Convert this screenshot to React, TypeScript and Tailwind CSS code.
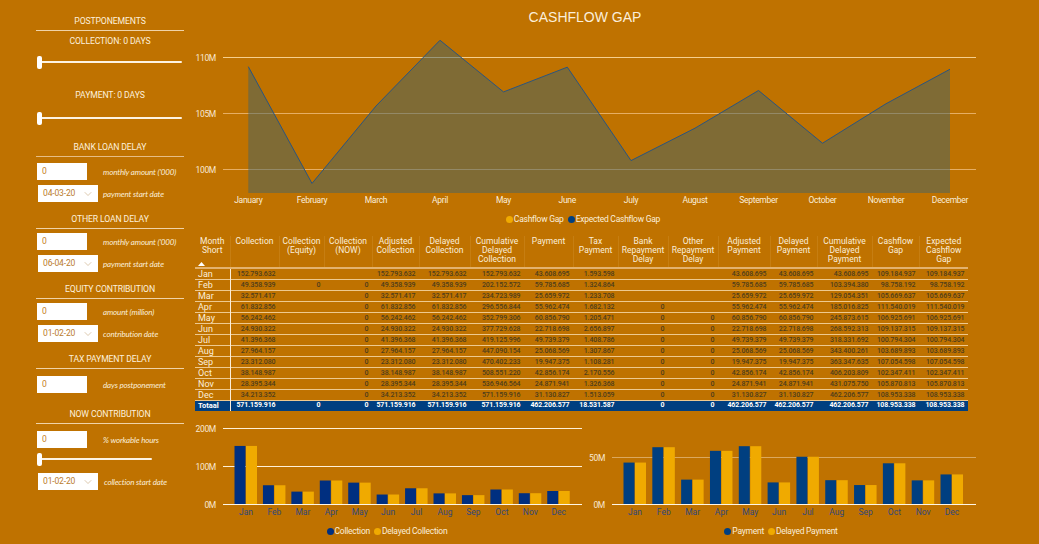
import React from "react";
import { ChevronDown } from "lucide-react";

const months = ["Jan", "Feb", "Mar", "Apr", "May", "Jun", "Jul", "Aug", "Sep", "Oct", "Nov", "Dec"];
const fullMonths = ["January", "February", "March", "April", "May", "June", "July", "August", "September", "October", "November", "December"];

const collection = ["152.793.632", "49.358.939", "32.571.417", "61.832.856", "56.242.462", "24.930.322", "41.396.368", "27.964.157", "23.312.080", "38.148.987", "28.395.344", "34.213.352"];
const cumCollection = ["152.793.632", "202.152.572", "234.723.989", "296.556.844", "352.799.306", "377.729.628", "419.125.996", "447.090.154", "470.402.233", "508.551.220", "536.946.564", "571.159.916"];
const payment = ["43.608.695", "59.785.685", "25.659.972", "55.962.474", "60.856.790", "22.718.698", "49.739.379", "25.068.569", "19.947.375", "42.856.174", "24.871.941", "31.130.827"];
const tax = ["1.593.598", "1.324.864", "1.233.708", "1.682.132", "1.205.471", "2.656.897", "1.408.786", "1.307.867", "1.108.281", "2.170.556", "1.326.368", "1.513.059"];
const cumPayment = ["43.608.695", "103.394.380", "129.054.351", "185.016.825", "245.873.615", "268.592.313", "318.331.692", "343.400.261", "363.347.635", "406.203.809", "431.075.750", "462.206.577"];
const gap = ["109.184.937", "98.758.192", "105.669.637", "111.540.019", "106.925.691", "109.137.315", "100.794.304", "103.689.893", "107.054.598", "102.347.411", "105.870.813", "108.953.338"];

const toNum = (s: string) => Number(s.split(".").join("")) / 1000000;

const zeroFrom = (start: number, only?: number) =>
  months.map((_, i) => (only !== undefined ? (i === only ? "0" : "") : i >= start ? "0" : ""));

const columns = [
  { head: ["Collection"], width: "w-[49px]", values: collection, total: "571.159.916" },
  { head: ["Collection", "(Equity)"], width: "w-[45px]", values: zeroFrom(0, 1), total: "0" },
  { head: ["Collection", "(NOW)"], width: "w-[48px]", values: zeroFrom(1), total: "0" },
  { head: ["Adjusted", "Collection"], width: "w-[47px]", values: collection, total: "571.159.916" },
  { head: ["Delayed", "Collection"], width: "w-[51px]", values: collection, total: "571.159.916" },
  { head: ["Cumulative", "Delayed", "Collection"], width: "w-[54px]", values: cumCollection, total: "571.159.916" },
  { head: ["Payment"], width: "w-[49px]", values: payment, total: "462.206.577" },
  { head: ["Tax", "Payment"], width: "w-[45px]", values: tax, total: "18.531.587" },
  { head: ["Bank", "Repayment", "Delay"], width: "w-[50px]", values: zeroFrom(3), total: "0" },
  { head: ["Other", "Repayment", "Delay"], width: "w-[50px]", values: zeroFrom(4), total: "0" },
  { head: ["Adjusted", "Payment"], width: "w-[52px]", values: payment, total: "462.206.577" },
  { head: ["Delayed", "Payment"], width: "w-[47px]", values: payment, total: "462.206.577" },
  { head: ["Cumulative", "Delayed", "Payment"], width: "w-[55px]", values: cumPayment, total: "462.206.577" },
  { head: ["Cashflow", "Gap"], width: "w-[47px]", values: gap, total: "108.953.338" },
  { head: ["Expected", "Cashflow", "Gap"], width: "w-[49px]", values: gap, total: "108.953.338" },
];

const Heading = ({ children, line = "border-[#f0d3a8]" }: { children: React.ReactNode; line?: string }) => (
  <div className={`ml-[36px] w-[148px] border-b ${line} pb-[3px] text-center text-[8.7px] leading-[12px] tracking-[-0.15px] text-[#fdf0dc]`}>{children}</div>
);

const Slider = ({ width }: { width: string }) => (
  <div className={`relative ml-[37px] h-[13px] ${width}`}>
    <div className="absolute left-[3px] right-0 top-[5px] h-[2px] rounded-full bg-[#fdf3e3]" />
    <div className="absolute left-0 top-0 h-[13px] w-[5px] rounded-[2px] bg-white" />
  </div>
);

const NumberField = ({ label, className = "" }: { label: string; className?: string }) => (
  <div className={`ml-[37px] flex items-center ${className}`}>
    <div className="flex h-[17px] w-[50px] items-center bg-white pl-[5px] font-['Roboto',sans-serif] text-[8.5px] text-[#c4801f]">0</div>
    <span className="ml-[16px] font-['Lato',sans-serif] text-[8px] italic tracking-[-0.15px] text-[#fbeeda]">{label}</span>
  </div>
);

const DateField = ({ value, label, className = "", labelGap = "ml-[5px]" }: { value: string; label: string; className?: string; labelGap?: string }) => (
  <div className={`ml-[38px] flex items-center ${className}`}>
    <div className="flex h-[17px] w-[60px] items-center justify-between bg-white pl-[5px] pr-[4px] font-['Roboto',sans-serif] text-[8.5px] tracking-[-0.15px] text-[#b97b2c]">
      {value}
      <ChevronDown size={12} strokeWidth={1} color="#b9925f" />
    </div>
    <span className={`${labelGap} font-['Lato',sans-serif] text-[8px] italic tracking-[-0.15px] text-[#fbeeda]`}>{label}</span>
  </div>
);

const Sidebar = () => (
  <aside className="w-[195px] shrink-0 pt-[15px] font-['Roboto',sans-serif]">
    <Heading>POSTPONEMENTS</Heading>
    <div className="mt-[4px] w-[184px] pl-[36px] text-center text-[8.7px] leading-[12px] tracking-[-0.15px] text-[#fdf0dc]">COLLECTION: 0 DAYS</div>
    <Slider width="w-[145px] mt-[9px]" />
    <div className="mt-[20px] w-[184px] pl-[36px] text-center text-[8.7px] leading-[12px] tracking-[-0.15px] text-[#fdf0dc]">PAYMENT: 0 DAYS</div>
    <Slider width="w-[145px] mt-[11px]" />

    <div className="mt-[16px]">
      <Heading line="border-[#e6bd85]">BANK LOAN DELAY</Heading>
    </div>
    <NumberField className="mt-[6px]" label="monthly amount ('000)" />
    <DateField className="mt-[5px]" value="04-03-20" label="payment start date" />

    <div className="mt-[11px]">
      <Heading>OTHER LOAN DELAY</Heading>
    </div>
    <NumberField className="mt-[4px]" label="monthly amount ('000)" />
    <DateField className="mt-[5px]" value="06-04-20" label="payment start date" />

    <div className="mt-[11px]">
      <Heading>EQUITY CONTRIBUTION</Heading>
    </div>
    <NumberField className="mt-[4px]" label="amount (million)" />
    <DateField className="mt-[5px]" value="01-02-20" label="contribution date" />

    <div className="mt-[11px]">
      <Heading>TAX PAYMENT DELAY</Heading>
    </div>
    <NumberField className="mt-[7px]" label="days postponement" />

    <div className="mt-[15px]">
      <Heading>NOW CONTRIBUTION</Heading>
    </div>
    <NumberField className="mt-[7px]" label="% workable hours" />
    <Slider width="w-[115px] mt-[5px]" />
    <DateField className="mt-[7px]" value="01-02-20" label="collection start date" labelGap="ml-[6px]" />
  </aside>
);

const Legend = ({ items, className = "" }: { items: { label: string; color: string }[]; className?: string }) => (
  <div className={`flex items-center justify-center gap-[4px] font-['Roboto',sans-serif] text-[8.5px] tracking-[-0.25px] text-[#fbeeda] ${className}`}>
    {items.map((item) => (
      <span key={item.label} className="flex items-center gap-[1px]">
        <svg width="7" height="7" viewBox="0 0 7 7">
          <circle cx="3.5" cy="3.5" r="3.5" fill={item.color} />
        </svg>
        {item.label}
      </span>
    ))}
  </div>
);

const CashflowChart = () => {
  const xs = [248.3, 312, 376, 440, 503.5, 567.3, 631, 695, 758.5, 822.5, 886, 950];
  const points = gap.map((g, i) => `${xs[i]},${57.5 + (110 - toNum(g)) * 11.2}`).join(" ");
  const grid = [
    { y: 57.5, label: "110M", color: "#f6cf8d" },
    { y: 113.5, label: "105M", color: "#e6ae64" },
    { y: 169.5, label: "100M", color: "#e6ae64" },
  ];
  return (
    <svg width="844" height="174" viewBox="195 34 844 174" className="block font-['Roboto',sans-serif]">
      {grid.map((g) => (
        <g key={g.label}>
          <line x1="223" x2="976" y1={g.y} y2={g.y} stroke={g.color} strokeWidth="1" />
          <text x="216" y={g.y + 3} textAnchor="end" fontSize="8.5" letterSpacing="-0.3" fill="#f9e8d2">{g.label}</text>
        </g>
      ))}
      <polygon points={`248.3,193 ${points} 950,193`} fill="#3f646a" fillOpacity="0.5" />
      <polyline points={points} fill="none" stroke="#2a5580" strokeWidth="1" />
      {fullMonths.map((m, i) => (
        <text key={m} x={xs[i]} y="203" textAnchor="middle" fontSize="8.5" letterSpacing="-0.3" fill="#fbeeda">{m}</text>
      ))}
    </svg>
  );
};

const BarChart = ({
  values,
  scale,
  viewBox,
  width,
  first,
  step,
  x1,
  x2,
  grid,
  navy,
}: {
  values: string[];
  scale: number;
  viewBox: string;
  width: number;
  first: number;
  step: number;
  x1: number;
  x2: number;
  grid: { y: number; label: string; color: string }[];
  navy: string;
}) => (
  <svg width={width} height="108" viewBox={viewBox} className="block shrink-0 font-['Roboto',sans-serif]">
    {grid.map((g) => (
      <g key={g.label}>
        <line x1={x1} x2={x2} y1={g.y} y2={g.y} stroke={g.color} strokeWidth="1" />
        <text x={x1 - 7} y={g.y + 3} textAnchor="end" fontSize="8.5" letterSpacing="-0.3" fill="#f9e8d2">{g.label}</text>
      </g>
    ))}
    {values.map((v, i) => {
      const h = toNum(v) * scale;
      const c = first + step * i;
      return (
        <g key={months[i]}>
          <rect x={c - 11.5} y={504 - h} width="11" height={h} fill={navy} />
          <rect x={c} y={504 - h} width="11" height={h} fill="#f0aa00" />
          <text x={c} y="515" textAnchor="middle" fontSize="8.5" fill="#33487a">{months[i]}</text>
        </g>
      );
    })}
  </svg>
);

const DataTable = () => (
  <table className="w-[773px] table-fixed border-collapse font-['Roboto',sans-serif]">
    <colgroup>
      <col className="w-[35px]" />
      {columns.map((c, i) => (
        <col key={i} className={c.width} />
      ))}
    </colgroup>
    <thead>
      <tr className="h-[32px] border-b-2 border-[#e3b26e]">
        <th className="relative p-0 align-top text-[8.5px] font-normal leading-[8.8px] text-[#fbeeda]">
          <div className="pt-[1px]">Month</div>
          <div>Short</div>
          <svg className="absolute bottom-[1px] left-[3px]" width="7" height="4" viewBox="0 0 7 4">
            <polygon points="3.5,0 7,4 0,4" fill="#ffffff" />
          </svg>
        </th>
        {columns.map((c, i) => (
          <th key={i} className="border-l border-[#c67e12] p-0 align-top text-[8.5px] font-normal leading-[8.8px] text-[#fbeeda]">
            <div className="pt-[1px]">
              {c.head.map((h) => (
                <div key={h}>{h}</div>
              ))}
            </div>
          </th>
        ))}
      </tr>
    </thead>
    <tbody>
      {months.map((m, r) => (
        <tr key={m} className="h-[11px] border-b border-[#eec98f]">
          <td className="border-r border-[#fbeeda] p-0 pl-[3px] text-[9px] leading-[10px] text-[#fbeeda]">{m}</td>
          {columns.map((c, i) => (
            <td key={i} className="p-0 pr-[3.5px] text-right text-[7px] font-medium leading-[10px] tracking-[-0.1px] text-[#4d3d1c]">
              {c.values[r]}
            </td>
          ))}
        </tr>
      ))}
      <tr className="h-[10px] border-t border-[#f2b84b] bg-[#003f80]">
        <td className="border-r border-[#fbeeda] p-0 pl-[3px] text-[7.5px] font-bold leading-[9px] text-white">Totaal</td>
        {columns.map((c, i) => (
          <td key={i} className="p-0 pr-[3.5px] text-right text-[7px] font-bold leading-[9px] tracking-[-0.1px] text-white">
            {c.total}
          </td>
        ))}
      </tr>
    </tbody>
  </table>
);

export default function App() {
  return (
    <div className="flex h-[544px] w-[1039px] overflow-hidden bg-[#bf7200]">
      <Sidebar />
      <main className="flex-1">
        <h1 className="h-[34px] w-[780px] pt-[8px] text-center font-['Liberation_Sans',sans-serif] text-[14px] font-normal leading-[18px] text-[#fbeeda]">
          CASHFLOW GAP
        </h1>
        <CashflowChart />
        <Legend
          className="h-[22px] w-[776px]"
          items={[
            { label: "Cashflow Gap", color: "#f0aa00" },
            { label: "Expected Cashflow Gap", color: "#003f80" },
          ]}
        />
        <div className="mt-[6px]">
          <DataTable />
        </div>
        <div className="mt-[4px] flex">
          <div className="w-[390px] shrink-0">
            <BarChart
              values={collection}
              scale={0.38}
              viewBox="195 415 390 108"
              width={390}
              first={246}
              step={28.43}
              x1={223}
              x2={582}
              navy="#002f80"
              grid={[
                { y: 428.5, label: "200M", color: "#fff0d6" },
                { y: 466.5, label: "100M", color: "#fff0d6" },
                { y: 504.5, label: "0M", color: "#fff6e6" },
              ]}
            />
            <Legend
              className="mt-[2px] h-[13px] w-[384px]"
              items={[
                { label: "Collection", color: "#002f80" },
                { label: "Delayed Collection", color: "#f0aa00" },
              ]}
            />
          </div>
          <div className="w-[454px] shrink-0">
            <BarChart
              values={payment}
              scale={0.95}
              viewBox="585 415 454 108"
              width={454}
              first={635}
              step={28.82}
              x1={612}
              x2={976}
              navy="#003f80"
              grid={[
                { y: 457.5, label: "50M", color: "#dba85e" },
                { y: 504.5, label: "0M", color: "#fff6e6" },
              ]}
            />
            <Legend
              className="mt-[2px] h-[13px] w-[392px]"
              items={[
                { label: "Payment", color: "#003f80" },
                { label: "Delayed Payment", color: "#f0aa00" },
              ]}
            />
          </div>
        </div>
      </main>
    </div>
  );
}
